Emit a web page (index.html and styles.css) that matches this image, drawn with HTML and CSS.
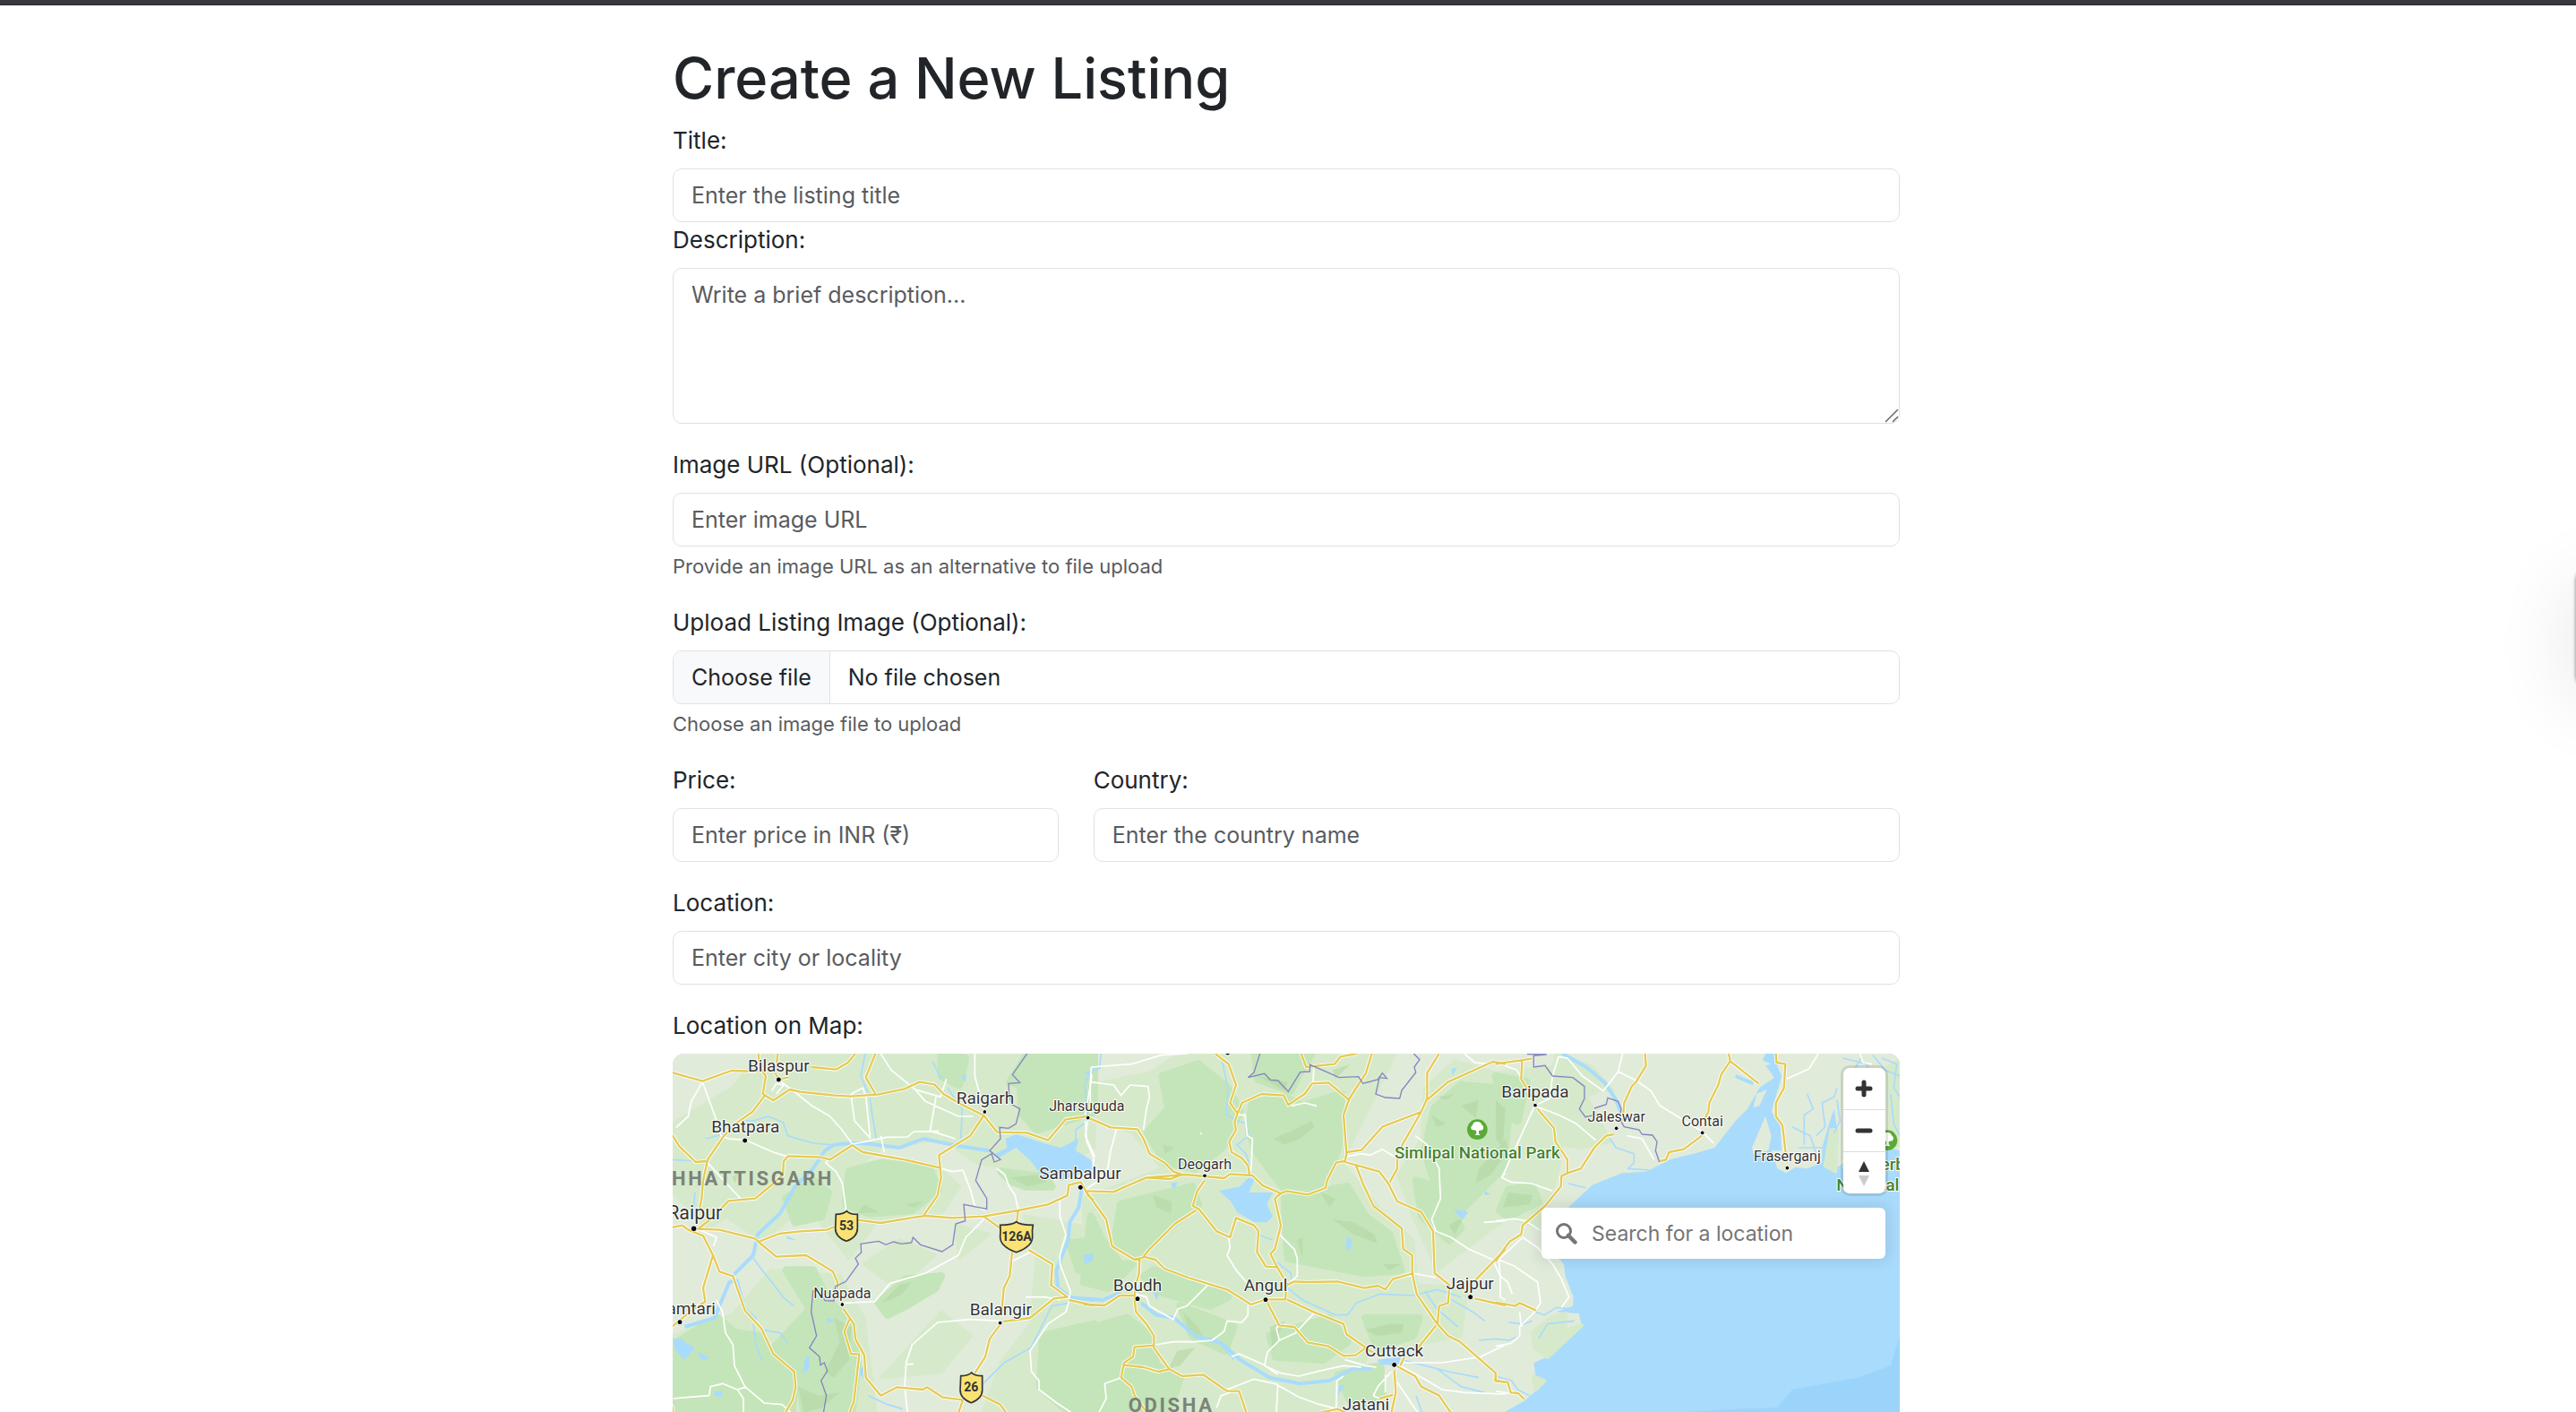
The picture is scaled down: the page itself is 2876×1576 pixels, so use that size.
FILE: index.html
```html
<!DOCTYPE html>
<html lang="en">
<head>
<meta charset="utf-8">
<meta name="viewport" content="width=device-width, initial-scale=1">
<title>Create a New Listing</title>
<link rel="stylesheet" href="styles.css">
</head>
<body>
<header class="topbar"></header>
<main class="page">
  <h1 class="page-title">Create a New Listing</h1>
  <form class="listing-form">
    <div class="field field-tight">
      <label class="label" for="title">Title:</label>
      <input class="control" id="title" type="text" placeholder="Enter the listing title">
    </div>
    <div class="field">
      <label class="label" for="description">Description:</label>
      <textarea class="control control-area" id="description" placeholder="Write a brief description..."></textarea>
    </div>
    <div class="field">
      <label class="label" for="image-url">Image URL (Optional):</label>
      <input class="control" id="image-url" type="text" placeholder="Enter image URL">
      <p class="help">Provide an image URL as an alternative to file upload</p>
    </div>
    <div class="field">
      <label class="label" for="image-file">Upload Listing Image (Optional):</label>
      <div class="control file-control">
        <span class="file-button">Choose file</span>
        <span class="file-name">No file chosen</span>
        <input class="file-input" id="image-file" type="file">
      </div>
      <p class="help">Choose an image file to upload</p>
    </div>
    <div class="field-row">
      <div class="field field-price">
        <label class="label" for="price">Price:</label>
        <input class="control" id="price" type="text" inputmode="numeric" placeholder="Enter price in INR (₹)">
      </div>
      <div class="field field-country">
        <label class="label" for="country">Country:</label>
        <input class="control" id="country" type="text" placeholder="Enter the country name">
      </div>
    </div>
    <div class="field">
      <label class="label" for="location">Location:</label>
      <input class="control" id="location" type="text" placeholder="Enter city or locality">
    </div>
    <div class="field-map">
      <label class="label" for="map-search">Location on Map:</label>
      <div class="map">
        <svg class="map-canvas" viewBox="0 15 4110 1206" preserveAspectRatio="xMinYMin slice" role="img" aria-label="Map of Odisha">
          <defs>
            <g id="minor">
              <g transform="translate(-3 0)">
                <path d="M103 110L146 228 165 290 190 300 245 304 340 345 382 358M103 110L65 175 55 225 15 262M360 105L420 150 470 190 530 225 570 270 605 318 720 295 790 294 810 276 870 275 950 300M605 318L570 340 515 380 550 410 572 450 585 550M700 15L735 70 815 135 900 160 920 100M815 135L850 175 960 225 1010 225M600 150L640 130 650 160 665 300M600 150L612 240 665 298M885 160L865 275 895 275M1015 15L1015 90 1045 200M700 290L712 345M905 400L940 410 975 405 1000 470 1015 525 1050 540M1090 400L1115 420 1130 460 1150 490 1160 535M575 850L680 845 730 785 850 750 960 690 985 630 1045 570M1100 910L1000 905 890 915 805 990 785 1050 780 1130 790 1218M788 1055L810 1055M150 840L170 880 180 950 205 990 210 1060 245 1130 310 1185 370 1190 400 1218M5 1170L60 1165 125 1160 130 1130 170 1120 220 1140 250 1130M220 1140L240 1170 240 1218M1300 500L1300 560 1320 620 1300 690 1300 720 1335 810 1330 845M1330 845L1320 880 1260 920 1200 1010 1205 1080 1230 1110 1230 1140 1290 1185 1340 1218M1140 710L1200 680M1185 830L1250 830 1300 840M1385 240L1390 310 1412 360M1408 85L1385 220"/>
                <path d="M120 380L165 430 230 500M80 600L150 630 140 660M335 140L350 115 375 120 350 150"/>
              </g>
              <g transform="translate(1377 0)">
                <path d="M25 60L160 50 260 20 350 15M25 60L22 110 100 120 125 155 155 120 215 125 220 160 210 200 200 270M22 110L22 215M15 230L5 290 35 355 30 400M110 265L90 340 80 400 45 445 12 465M512 220L540 220 548 290 565 300 560 410M695 190L740 180 780 190M770 65L768 110M880 360L930 350 960 355 1000 335 1040 360M1110 290L1150 320 1190 400 1195 500 1165 570 1180 610 1230 630 1290 670 1370 705 1395 760 1395 830 1412 840M1100 750L1180 765M485 630L490 665 480 690 510 740 545 780 555 800M655 620L705 670 715 700 715 760 690 780M175 820L210 830 220 860 300 905 315 870 345 860 415 790M240 990L300 980 370 980 430 975 470 945 480 910 530 915 550 890 550 860M770 885L710 950 655 975 645 935 655 920M655 975L615 1015 605 1060 660 1085 720 1095 800 1075 870 1060 930 1065M495 1030L520 1020 600 1055 650 1090M480 1140L570 1105 640 1120 720 1165 790 1190 850 1205M650 1120L645 1218M845 1210L848 1110 870 1095M875 1040L945 1060 980 1065M1060 1050L1200 1050 1330 1030 1412 990M1060 1060L1150 1110 1200 1140 1280 1150 1412 1155M1050 1115L1100 1190 1120 1218M1030 1080L985 1130 970 1160 990 1170M1010 1090L1010 1150M50 1218L75 1170 70 1120 125 1100M445 1200L460 1160 490 1150M1275 15L1310 45 1360 50M1340 580L1412 575M1400 430L1412 415M390 280L395 285"/>
              </g>
              <g transform="translate(2757 0)">
                <path d="M130 190L210 220 270 250 335 305M130 190L80 300 20 430 50 445 120 450 190 475M130 190L180 165 190 90 210 25 240 30M240 30L290 90 360 140 410 75 470 105 520 140 550 190 600 220 690 275 730 315M410 75L425 15M440 290L490 300 530 370M0 575L60 568 100 575 145 605M90 630L140 665 190 720 220 770 245 830 220 865M90 630L10 705 15 760 40 780 55 820M10 705L60 725 140 780 150 850 130 880 80 930 80 960 50 985 0 995M80 880L85 930M975 100L1050 65 1080 15M30 55L70 70 85 95M1220 15L1230 45 1260 50M0 1145L60 1155"/>
              </g>
            </g>
            <g id="major">
              <g transform="translate(-3 0)">
                <path d="M0 78L103 107 200 72 290 75M290 15L295 60M355 15L350 60M295 60L315 90 305 150 340 172 395 135 430 143 500 150 545 155 600 158 690 152 780 133 830 110 880 118 910 150 970 185 1045 222 1090 278 1190 280 1260 305 1320 235 1390 225M345 80L360 100 390 95M468 60L550 68 590 45 615 15M682 15L650 95 682 150M312 155L270 210 220 245 175 290 120 370 105 440 100 500 92 540M0 285L25 325 80 378 115 375M1045 222L1000 290 895 355 902 430 890 490 845 555M90 600L130 570 190 508 280 500 340 450 372 420 375 375 390 358 500 362 530 370 560 350 605 322 640 345 780 370 900 398M80 602L160 605 280 635 290 645 360 618 430 610 520 605 545 595M622 572L700 582 800 565 850 558 940 565 1045 560 1160 540 1260 520 1325 490 1330 455 1370 445 1395 490 1412 505M1045 560L1100 600M1160 540L1155 585M0 597L35 590 55 605 105 625 138 690 105 800 112 845 60 880 0 930M138 690L160 745 205 760 245 875 300 935 340 1020 410 1080 415 1130 405 1175 380 1218M290 645L350 695 450 690 540 745 555 780 555 800M575 870L610 920 615 970 645 1025 650 1100 700 1160 755 1132 840 1140 855 1132 905 1165 975 1175 960 1218M595 905L578 945 600 1020 628 1022 610 1180 595 1218M1140 680L1132 760 1112 800 1105 880M1195 672L1275 720 1270 790 1325 830 1280 835 1200 900 1110 912M1098 925L1065 970 1050 1030 1015 1085M1330 840L1412 858M1040 1160L1100 1190 1120 1218M0 1190L5 1218"/>
              </g>
              <g transform="translate(1377 0)">
                <path d="M440 15L485 50 510 120 490 180 515 215 505 245 510 270 487 310 495 345 530 365 550 390 555 420M515 215L530 180 595 150 670 155 685 187 740 150 765 115 820 112 888 170M728 15L745 60 840 50 860 25 915 15M965 15L945 80 890 165 870 220 880 350 875 375 845 380 815 440 810 465 750 487 680 475 660 483 600 457 565 423 490 418 470 432 340 420 210 430 140 460 100 478 10 475M15 230L90 262 180 268 200 300 220 350 270 380 300 410 330 420 290 435 210 430M880 345L930 338 1000 260 1130 210 1150 165 1150 80 1190 15M1150 170L1220 110 1370 42 1412 50M1130 210L1050 350 1050 400 1025 445M875 378L990 410 1020 450 1050 510 1130 545 1170 610 1175 750 1225 790 1220 850 1190 860 1185 920M912 390L935 450 970 525 1065 600 1070 670 1100 690 1100 750 1115 820 1180 915 1220 960 1260 980 1380 1085 1378 1110 1412 1115M1105 750L1035 770 1010 805 985 792 940 800 850 778 750 780 705 778 680 790M1180 925L1120 1000M660 483L640 500 660 590 640 670 625 685 645 725 680 785 675 838 610 838M645 730L610 728 580 680 585 610 570 590 510 565 490 630 445 610 385 535 365 525 380 475 405 440M375 540L305 585 220 670 200 695 240 705 270 735 350 765 480 805 560 855 605 840M10 480L75 570 95 660 170 705 200 697M187 700L185 750 172 800 170 840 175 880 210 920 235 960 235 1000 285 1070 330 1095 400 1090 480 1145 520 1145 545 1218M235 992L170 997 165 1030 135 1050 125 1100 160 1130 170 1160 210 1215M135 1058L200 1065 250 1080 285 1072M0 855L70 858 120 825 170 825M615 850L655 925 705 930 750 982 820 995 870 1027 910 1025 945 1000 880 955 870 920 770 880 680 838M1310 775L1412 670M1310 835L1412 858M1040 1075L1045 1150 1030 1218M1045 1060L1110 1095 1130 1130 1190 1160 1230 1218M1075 1030L1060 1060M990 1170L1035 1158M790 1218L850 1205 880 1218M945 1003L1000 1030"/>
              </g>
              <g transform="translate(2757 0)">
                <path d="M0 50L120 32M88 40L85 100 125 165M140 200L195 265 200 310 240 370 240 415 285 400 330 330 370 290 395 285M240 415L220 425 218 460 165 525 90 590 85 620 45 645 0 710M500 15L503 55 470 110 455 125 430 180 425 240M780 15L785 40 755 85 745 120 715 180 712 210 698 235M785 40L880 115M690 290L630 335 580 345 570 370 550 375M938 15L940 45 970 50 965 130 938 180 938 225 960 255 975 380M0 848L65 860 80 850 135 875M0 1085L0 1112 40 1115 50 1150 75 1152 95 1172"/>
              </g>
            </g>
          </defs>
          <rect class="land" y="15" width="4110" height="1206"/>
          <g class="grass">
            <path d="M0 250L200 130 300 15 1412 15 1412 330 1250 420 1020 380 900 300 700 330 500 480 300 640 180 560 120 600 0 480zM560 380L880 390 960 460 900 550 680 580 590 700 480 560zM330 740L560 760 640 900 680 1218 0 1218 0 960 200 890zM1180 560L1412 600 1412 1218 1040 1218 1100 1050 1200 920 1220 700zM640 720L760 640 880 690 750 800zM700 1100L900 880 1000 960 900 1080zM950 590L1060 620 960 700z"/>
            <path d="M1400 120L1600 80 1700 15 2420 15 2240 380 2390 560 2480 640 2490 790 2660 800 2640 960 2330 1020 2230 1218 1377 1218 1377 500 1640 400 1540 280 1400 220z"/>
            <path d="M2520 130L2620 40 2757 80 2960 60 3120 130 3060 160 3140 310 3040 330 2980 320 2960 430 2900 600 2800 560 2560 740 2480 560 2430 420 2510 300zM2960 15L3080 60 3150 140 3090 130 2950 60z"/>
          </g>
          <g class="forest">
            <path d="M1190 15L1412 15 1412 210 1220 270 1170 215 1165 120 1130 110zM590 410L700 380 860 400 890 470 800 540 660 550 580 520zM380 500L470 440 520 480 500 560 410 580zM0 990L150 900 210 950 290 960 350 1040 410 1100 400 1218 0 1218zM380 740L470 740 520 840 600 920 620 1060 600 1218 440 1218 420 1080 340 1000 460 870zM1240 960L1412 920 1412 1218 1330 1218 1230 1130zM1100 410L1250 430 1270 460 1180 460 1130 440zM690 850L780 770 900 760 880 800 780 860 720 890zM900 20L980 30 960 120 900 90zM1330 650L1412 640 1412 720 1360 740z"/>
            <path d="M1640 90L1760 50 1860 130 1900 210 1840 330 1750 400 1650 380 1590 280 1660 200zM1940 180L2050 160 2110 190 2240 150 2230 330 2180 450 2050 470 1960 350 1930 280zM1500 520L1740 460 1760 520 1660 600 1560 690 1480 650zM1400 560L1440 640 1500 720 1540 720 1460 800 1377 780zM2050 500L2260 460 2320 560 2400 620 2440 740 2320 750 2160 720 2060 700zM1610 740L1760 780 1860 830 1800 860 1620 810 1580 760zM1377 940L1520 900 1600 960 1620 1060 1700 1100 1660 1218 1377 1218zM1700 860L1880 930 1850 1010 1740 960zM2000 960L2200 900 2260 980 2180 1040 2020 1030zM2320 900L2500 900 2480 960 2360 1000zM1950 15L2140 15 2100 80 2070 140 1960 100zM2230 1090L2370 1060 2380 1160 2280 1200z"/>
            <path d="M2550 200L2640 120 2757 130 2800 220 2780 400 2700 480 2620 560 2560 480 2520 340zM2800 470L2880 460 2900 510 2800 560 2770 540zM2757 90L2860 110 2830 240 2780 220zM2490 440L2560 460 2640 600 2600 640 2510 560z"/>
          </g>
          <g class="relief">
            <path d="M700 850L760 790 800 780 770 820 730 840zM540 900L600 930 590 1040 540 1100 510 1080 560 980zM1130 430L1240 420 1250 445 1190 460zM420 1130L490 1160 560 1150 500 1200 440 1218zM200 430L220 410 210 450zM780 520L840 510 810 530zM690 545L620 550 640 520z"/>
            <path d="M2010 300L2080 270 2140 240 2150 260 2100 300 2050 320zM1610 490L1670 510 1670 550 1620 530zM2210 570L2280 580 2350 620 2360 650 2280 620zM2170 480L2220 500 2200 530zM1710 880L1760 930 1780 970 1730 950zM1690 1010L1750 1000 1700 1060 1660 1070zM2320 940L2400 920 2450 920 2440 950 2360 960zM2090 640L2110 630 2110 700zM1960 90L2060 110 2050 140zM2210 70L2270 50 2220 100zM2380 720L2440 720 2400 740zM1640 320L1680 330 1650 350zM2000 930L2050 910 2010 1010z"/>
            <path d="M2700 400L2750 350 2790 300 2800 340 2740 420 2690 450zM2800 480L2880 490 2870 520 2780 530zM2640 190L2700 170 2690 230zM2560 160L2620 150 2590 170zM2757 170L2790 200 2780 330 2757 300zM2600 590L2650 560 2620 620zM2540 220L2590 250 2560 260z"/>
          </g>
          <path class="water" d="M3660 15L4110 15 4110 1221 2775 1221 2850 1180 2920 1120 2890 1100 2885 1050 2930 1030 3045 925 3035 885 2960 880 3015 860 3017 830 2990 760 2985 720 2950 680 2960 560 3000 530 3080 455 3180 415 3260 410 3320 380 3340 370 3420 350 3490 330 3560 240 3600 200 3640 130 3690 95 3650 40z"/>
          <path class="land" d="M3700 15L3700 60 3715 90 3700 140 3680 210 3710 250 3714 340 3680 340 3700 400 3730 415 3760 395 3800 400 3850 380 3850 330 3870 260 3890 200 3905 300 3890 400 3930 380 3960 300 4110 340 4110 15zM3660 225L3680 290 3670 340 3620 350 3615 330zM3630 150L3665 135 3640 190 3620 195zM3500 15L3600 15 3680 50 3640 60z"/>
          <path class="deep" d="M4110 960L4080 1060 3970 1100 3750 1140 3700 1200 3560 1205 3300 1221 4110 1221z"/>
          <g class="grass">
            <path d="M2885 1000L2880 950 2940 900 2990 885 2990 940 3045 925 2930 1032zM2882 1095L2920 1110 2890 1140zM3860 390L3880 270 3900 270 3895 410z"/>
            <path d="M4070 60L4110 40 4110 320 4075 330z"/>
          </g>
          <g class="river">
            <path class="river-wide" d="M205 755L270 690 285 620 360 550 410 460 470 400 510 340 540 320 600 315 640 315 760 330 840 300 960 325 1060 340M1370 470L1360 530 1330 580 1325 640 1285 740 1290 800 1330 830 1412 840M40 930L140 900 190 780 215 775 240 870 280 905M1377 835L1440 840 1500 815M1570 850L1620 890 1680 900 1750 960 1840 985 1900 1040 2000 1100 2100 1120 2200 1110 2280 1070 2340 1070"/>
            <path d="M110 300L190 280 220 240 270 240 320 225 370 245 385 290 470 315 530 320M645 15L630 90 660 160 670 230 682 300M870 40L900 100M920 130L970 200 965 300M0 370L80 375M75 480L70 540M270 700L300 740 340 790 370 830 405 860M300 940L360 950 385 985M270 920L280 990 300 1045M1330 850L1270 860 1225 950 1200 1000 1110 1050 1040 1120M1400 70L1380 120 1390 240 1350 270 1350 320M1435 15L1430 65 1380 80M1840 40L1860 130 1855 220 1890 240 1920 250 1930 290 1890 320 1920 350 1940 410M1960 620L2010 640M2020 710L2070 750 2075 780M2060 800L2110 840 2220 890 2260 890 2290 850 2370 820 2480 825 2560 805 2640 830M2520 810L2560 870 2630 930M2610 840L2680 880 2720 910M2440 1040L2560 1070 2640 1130 2720 1150M2520 1060L2600 1080 2700 1100M2490 1160L2510 1218M2700 975L2757 970M1820 970L1880 1040M3140 300L3160 330 3220 350 3220 380 3200 400 3270 405M2757 970L2800 975 2840 960M2890 880L2920 890 2960 865 3010 870M2900 970L2930 920 3020 910M2757 1095L2810 1110 2830 1140 2870 1160M3000 450L3060 465M2800 915L2850 920 2880 910M655 1160L720 1190 770 1205"/>
            <path class="river-wide" d="M2980 15L3060 60 3120 110 3160 170 3175 210M3620 115L3560 90"/>
            <path d="M3750 260L3810 290 3830 350M3790 320L3790 220 3820 200 3800 150M3830 290L3860 260 3850 180 3890 160 3900 130M3770 330L3850 330M3920 30L4000 50 4010 100 3930 150M4020 20L4060 70 4110 90M3900 170L3910 240 3890 280M3980 30L3940 100 3960 170M4050 30L4100 50 4090 130 4110 160M4080 150L4090 250 4110 290"/>
          </g>
          <path class="water" d="M1115 300L1150 285 1260 320 1300 330 1360 300 1350 340 1400 370 1412 400 1300 440 1240 430 1200 375 1150 330 1090 365 1080 350 1120 330zM1830 475L1900 460 1930 430 1950 435 1930 480 2010 480 1990 520 2010 560 1990 580 1950 580 1890 545 1870 510zM0 970L30 970 45 985 75 1000 40 1040 10 1010zM85 1015L120 1030 115 1042 90 1035zM445 1030L460 1030 455 1075 435 1085zM515 900L545 907 520 918zM628 1065L642 1065 640 1105 628 1090zM140 1145L170 1145 160 1165 140 1160zM2258 625L2275 640 2270 675 2255 665zM1668 450L1692 445 1680 472zM2615 535L2665 545 2645 572zM1610 820L1628 815 1622 840zM2610 65L2628 62 2610 90zM1377 700L1412 705 1380 720zM2720 475L2740 485 2720 490zM2230 1125L2250 1125 2230 1160zM380 625L415 640 385 635zM965 90L985 85 980 110z"/>
          <g class="water"><path d="M1370 690L1412 685 1400 715zM2360 1040L2440 1030 2430 1060 2370 1055z"/></g>
          <use class="minor-road" href="#minor"/>
          <use class="road-casing" href="#major"/>
          <use class="road" href="#major"/>
          <path class="border" d="M1187 15L1138 85 1163 112 1125 115 1127 150 1135 185 1163 200 1150 250 1125 265 1095 262 1098 300 1062 340 1098 370 1077 378 1068 350 1035 370 1015 440 1052 500 1052 535 975 520 980 575 948 585 938 655 902 678 830 655 805 630 800 648 765 652 740 645 714 655 690 643 630 652 632 680 612 700 622 720 580 778 545 795 540 843 510 842 500 825 470 810 464 880 482 960 458 1000 492 1030 495 1058 508 1050 518 1078 497 1110 515 1160 505 1218"/>
          <path class="border" transform="translate(1377 0)" d="M590 15L570 78 550 95 605 82 625 103 650 105 685 142 725 77 757 75 758 52 855 95 920 92 935 115 985 102 1000 80 1015 98 990 95 978 150 1010 162 1058 165 1065 138 1112 78 1107 60 1125 35 1105 15"/>
          <path class="border" transform="translate(2757 0)" d="M105 17L170 18 127 22 127 60 165 55 190 90 258 95 297 125 297 165 280 200 300 227 335 220M330 198L370 185 375 163 410 175 420 200 415 235 430 260 480 270 490 285 525 288 540 310 535 340 548 378"/>
          <g class="dots">
            <circle cx="355" cy="102" r="9"/><circle cx="242" cy="306" r="9"/><circle cx="71" cy="601" r="10"/><circle cx="24" cy="914" r="9"/><circle cx="1045" cy="210" r="7"/><circle cx="1391" cy="230" r="7"/><circle cx="1366" cy="463" r="9"/><circle cx="568" cy="855" r="7"/><circle cx="1097" cy="917" r="7"/>
            <circle cx="1859" cy="12" r="9"/><circle cx="1782" cy="424" r="7"/><circle cx="1557" cy="836" r="9"/><circle cx="1986" cy="839" r="9"/><circle cx="2672" cy="830" r="9"/><circle cx="2417" cy="1057" r="9"/>
            <circle cx="2889" cy="188" r="7"/><circle cx="3161" cy="265" r="7"/><circle cx="3449" cy="280" r="7"/><circle cx="3733" cy="398" r="7"/>
          </g>
          <g class="shields">
            <path d="M547 553Q572 553 583 542 592 553 619 553V600Q619 630 582 643 545 630 545 600z"/>
            <path d="M965 1094Q990 1094 1001 1083 1010 1094 1037 1094V1141Q1037 1171 1000 1184 963 1171 963 1141z"/>
            <path d="M1097 589Q1140 589 1151 578 1162 589 1207 589Q1203 605 1205 625 1208 660 1151 680 1094 660 1097 625 1099 605 1097 589z"/>
          </g>
          <g class="shield-text"><text x="582" y="606">53</text><text x="1000" y="1147">26</text><text x="1152" y="642">126A</text></g>
          <g class="parks">
            <circle cx="2695" cy="269" r="34"/><circle cx="4068" cy="305" r="34"/>
            <g fill="#fff"><path id="tree" d="M2676 269a10 10 0 0 1 3-14 16 14 0 0 1 31-2 11 11 0 0 1 2 18l-12 2v10l5 5h-18l5-5v-10z"/><use href="#tree" x="1373" y="36"/></g>
          </g>
          <g class="state"><text x="-3" y="455">HHATTISGARH</text><text x="1526" y="1214">ODISHA</text></g>
          <g class="places">
            <g class="city"><text x="355" y="75">Bilaspur</text><text x="244" y="280">Bhatpara</text><text x="1047" y="183">Raigarh</text><text x="1365" y="436">Sambalpur</text><text x="1099" y="891">Balangir</text><text x="62" y="887">amtari</text><text x="1557" y="810">Boudh</text><text x="1986" y="811">Angul</text><text x="2671" y="804">Jajpur</text><text x="2417" y="1030">Cuttack</text><text x="2322" y="1210">Jatani</text><text x="2889" y="161">Baripada</text></g>
            <g class="capital"><text x="74" y="569">Raipur</text></g>
            <g class="town"><text x="1387" y="207">Jharsuguda</text><text x="568" y="833">Nuapada</text><text x="1782" y="402">Deogarh</text><text x="3161" y="244">Jaleswar</text><text x="3449" y="257">Contai</text><text x="3733" y="375">Fraserganj</text></g>
            <g class="park-name"><text x="2695" y="366">Simlipal National Park</text><text x="4068" y="405">Sunderbans</text><text x="4003" y="473">National</text></g>
          </g>
        </svg>
        <div class="map-overlay">
          <div class="zoom-group">
            <button class="zoom-button" type="button" aria-label="Zoom in"><svg viewBox="0 0 46 46"><path d="M23 16V30M16 23H30"/></svg></button>
            <button class="zoom-button" type="button" aria-label="Zoom out"><svg viewBox="0 0 46 46"><path d="M16 23H30"/></svg></button>
            <button class="zoom-button" type="button" aria-label="Reset bearing to north"><svg class="compass" viewBox="0 0 46 46"><path d="M17 22L23 10 29 22z" fill="#333"/><path d="M17 26L23 38 29 26z" fill="#ccc"/></svg></button>
          </div>
          <div class="search">
            <svg class="search-icon" viewBox="0 0 24 24"><circle cx="9" cy="9" r="7.5"/><path d="M14 14L21.5 21.5" stroke-width="4.500"/></svg>
            <input class="search-input" id="map-search" type="text" placeholder="Search for a location">
          </div>
        </div>
      </div>
    </div>
  </form>
</main>
<aside class="edge-panel"></aside>
</body>
</html>
```

FILE: styles.css
```css
* { box-sizing: border-box; }

body {
  margin: 0;
  background: #fff;
  color: #212529;
  font-family: Inter, "Open Sans", sans-serif;
  font-size: 26px;
  overflow-x: hidden;
}

.topbar {
  height: 6px;
  background: #3b393f;
  border-bottom: 1px solid #2b272e;
}

.page {
  max-width: 1410px;
  margin: 0 auto;
  padding: 43px 22px 0 18px;
}

.page-title {
  margin: 0 0 12px;
  font-size: 63px;
  line-height: 76px;
  font-weight: 500;
}

.field { margin-bottom: 26px; }
.field-tight { margin-bottom: 0; }

.field-row {
  display: grid;
  grid-template-columns: repeat(12, minmax(0, 1fr));
  column-gap: 39px;
}
.field-price { grid-column: span 4; }
.field-country { grid-column: span 8; }

.label {
  display: block;
  width: fit-content;
  margin-bottom: 12px;
  line-height: 39px;
}

.control {
  display: block;
  width: 100%;
  height: 60px;
  padding: 0 20px;
  border: 1px solid #dee2e6;
  border-radius: 10px;
  background: #fff;
  color: #212529;
  font: inherit;
  font-size: 25px;
  line-height: 39px;
}
.control::placeholder { color: #595c5f; opacity: 1; }

.control-area {
  height: 174px;
  padding: 10px 20px;
  resize: vertical;
}
.control-area::-webkit-resizer {
  background: url("data:image/svg+xml,%3Csvg xmlns='http://www.w3.org/2000/svg' viewBox='0 0 15 15'%3E%3Cpath d='M0 14L14 0M8 14L14 8' stroke='%23666' stroke-width='1.500'/%3E%3C/svg%3E") no-repeat;
}

.file-control {
  position: relative;
  display: flex;
  padding: 0;
  overflow: hidden;
  line-height: 58px;
}
.file-button {
  padding: 0 20px;
  border-right: 1px solid #dee2e6;
  background: #f8f9fa;
}
.file-name { padding-left: 20px; }
.file-input {
  position: absolute;
  inset: 0;
  width: 100%;
  opacity: 0;
}

.help {
  margin: 6px 0 0;
  color: #595c5f;
  font-size: 22px;
  line-height: 33px;
}

.map {
  position: relative;
  height: 400px;
  overflow: hidden;
  border-radius: 13px 13px 0 0;
  background: #a9dbfc;
}
.map-canvas { display: block; width: 100%; height: 100%; }

.land { fill: #e1ebda; }
.grass { fill: #d6eacb; stroke: #d6eacb; stroke-width: 12; stroke-linejoin: round; }
.forest { fill: #c4e5b9; stroke: #c4e5b9; stroke-width: 26; stroke-linejoin: round; }
.relief { fill: #b5d6a5; opacity: .6; }
.water { fill: #a9dbfc; }
.deep { fill: #9bd4fa; }
.river { fill: none; stroke: #a9dbfc; stroke-width: 5; stroke-linejoin: round; }
.river-wide { stroke-width: 12; }
.minor-road { fill: none; stroke: #fff; stroke-width: 5; stroke-linejoin: round; }
.road-casing { fill: none; stroke: #fff; stroke-width: 12; stroke-linejoin: round; }
.road { fill: none; stroke: #e5ca52; stroke-width: 7; stroke-linejoin: round; }
.border { fill: none; stroke: #8585c0; stroke-width: 4; }
.dots { fill: #000; stroke: #fff; stroke-width: 3; }
.shields { fill: #fae374; stroke: #333; stroke-width: 5; }
.shield-text {
  fill: #333;
  font: 700 42px Roboto, sans-serif;
  text-anchor: middle;
}
.parks { fill: #5aaa35; }

.state {
  fill: #7b8378;
  font: 700 66px Roboto, sans-serif;
  letter-spacing: 8px;
}
.places {
  fill: #333;
  stroke: #fff;
  stroke-width: 6;
  stroke-linejoin: round;
  paint-order: stroke;
  text-anchor: middle;
  font-family: Roboto, sans-serif;
}
.city { font-size: 57px; }
.capital { font-size: 64px; }
.town { font-size: 48px; }
.park-name { fill: #45842f; font-size: 56px; font-weight: 500; }

.map-overlay {
  position: absolute;
  inset: 0;
  display: flex;
  flex-direction: column;
  align-items: flex-end;
  gap: 16px;
  padding: 16px;
}

.zoom-group {
  display: flex;
  flex-direction: column;
  width: 47px;
  border-radius: 7px;
  background: #fff;
  box-shadow: 0 0 0 3px rgba(0, 0, 0, .1);
}
.zoom-button {
  height: 46px;
  padding: 0;
  border: 0;
  background: none;
}
.zoom-button + .zoom-button {
  height: 47px;
  border-top: 1px solid #ddd;
}
.zoom-button svg {
  display: block;
  width: 46px;
  height: 46px;
  fill: none;
  stroke: #333;
  stroke-width: 5;
  stroke-linecap: round;
}
.zoom-button .compass { stroke: none; }

.search {
  display: flex;
  align-items: center;
  gap: 16px;
  width: 384px;
  max-width: 100%;
  height: 57px;
  padding: 0 16px;
  border-radius: 6px;
  background: #fff;
  box-shadow: 0 0 16px 3px rgba(0, 0, 0, .1);
}
.search-icon {
  flex: none;
  width: 24px;
  height: 24px;
  fill: none;
  stroke: #757575;
  stroke-width: 3;
  stroke-linecap: round;
}
.search-input {
  flex: 1;
  min-width: 0;
  padding: 0;
  border: 0;
  outline: 0;
  background: none;
  color: #404040;
  font: 23px Inter, sans-serif;
}
.search-input::placeholder { color: #757575; opacity: 1; }

.edge-panel {
  position: fixed;
  top: 636px;
  right: -60px;
  width: 60px;
  height: 130px;
  border-radius: 12px;
  background: #ccc;
  box-shadow: 0 0 4px rgba(0, 0, 0, .5), 0 16px 90px rgba(0, 0, 0, .12);
}
```
